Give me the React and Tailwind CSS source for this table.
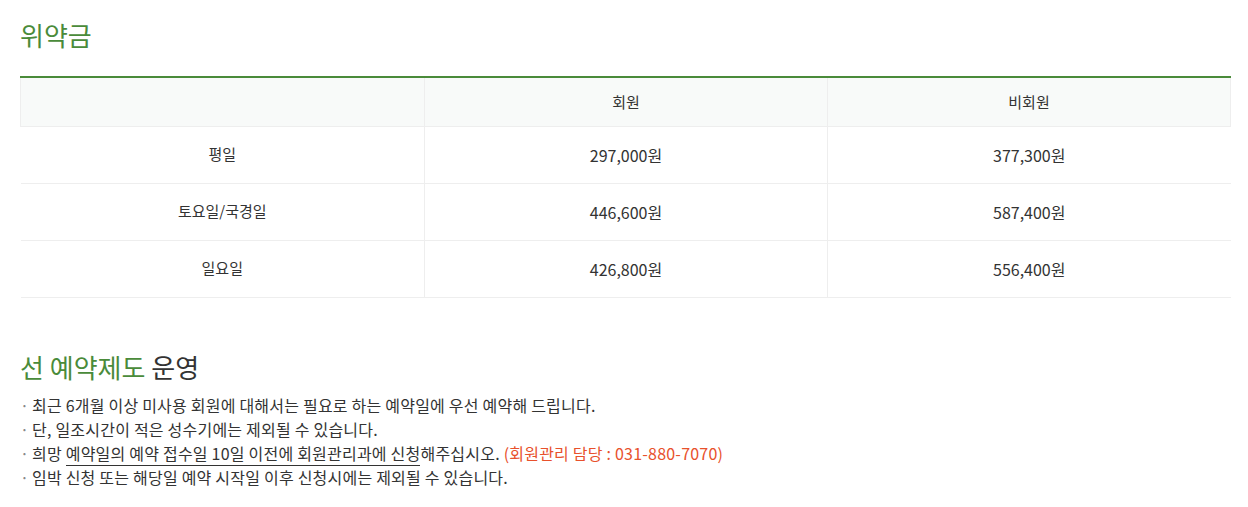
const rows = [
  { day: '평일', member: '297,000원', guest: '377,300원' },
  { day: '토요일/국경일', member: '446,600원', guest: '587,400원' },
  { day: '일요일', member: '426,800원', guest: '556,400원' },
];

export default function App() {
  return (
    <div className="bg-white min-h-[507px] pl-5 pt-[18px] text-[#333] font-['Noto_Sans_CJK_KR','Noto_Sans',sans-serif]">
      <div className="w-[1211px]">
        {/* 위약금 */}
        <h2 className="text-[26px] leading-[34px] text-[#4a8b3a] font-normal">위약금</h2>

        <table className="mt-6 w-full border-collapse border-t-2 border-t-[#4a8b3a] text-[15px]">
          <thead>
            <tr className="bg-[#f8faf9] h-[49px]">
              <th className="w-[404px] font-normal border border-[#eeeeee] border-t-0"></th>
              <th className="w-[403px] font-normal border border-[#eeeeee] border-t-0">회원</th>
              <th className="font-normal border border-[#eeeeee] border-t-0">비회원</th>
            </tr>
          </thead>
          <tbody className="text-[16px]">
            {rows.map((r) => (
              <tr key={r.day} className="h-[57px]">
                <td className="text-center border-b border-[#eeeeee] text-[15px]">{r.day}</td>
                <td className="text-center border-b border-l border-[#eeeeee]">{r.member}</td>
                <td className="text-center border-b border-l border-[#eeeeee]">{r.guest}</td>
              </tr>
            ))}
          </tbody>
        </table>

        {/* 선 예약제도 운영 */}
        <h2 className="mt-[51px] text-[26px] leading-[36px] font-normal">
          <span className="text-[#4a8b3a]">선 예약제도</span> 운영
        </h2>
        <ul className="mt-2 text-[16px] leading-[24px] tracking-[0.22px]">
          <li className="flex">
            <span className="w-3 text-[#888]">·</span>
            <span>최근 6개월 이상 미사용 회원에 대해서는 필요로 하는 예약일에 우선 예약해 드립니다.</span>
          </li>
          <li className="flex">
            <span className="w-3 text-[#888]">·</span>
            <span>단, 일조시간이 적은 성수기에는 제외될 수 있습니다.</span>
          </li>
          <li className="flex">
            <span className="w-3 text-[#888]">·</span>
            <span>
              희망 <span className="border-b border-[#333]">예약일의 예약 접수일 10일 이전에 회원관리과에 신청</span>해주십시오.{' '}
              <span className="text-[#e8512c]">(회원관리 담당 : 031-880-7070)</span>
            </span>
          </li>
          <li className="flex">
            <span className="w-3 text-[#888]">·</span>
            <span>임박 신청 또는 해당일 예약 시작일 이후 신청시에는 제외될 수 있습니다.</span>
          </li>
        </ul>
      </div>
    </div>
  );
}
